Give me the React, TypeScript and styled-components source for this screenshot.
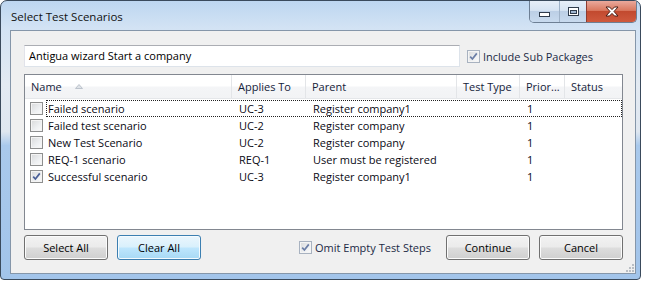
import React from "react";
import styled, { createGlobalStyle } from "styled-components";

const GlobalStyle = createGlobalStyle`
  html, body { margin: 0; padding: 0; background: #fff; }
  body {
    font-family: "Open Sans", "Noto Sans", sans-serif;
    font-size: 11px;
    color: #000;
  }
`;

const Window = styled.div`
  box-sizing: border-box;
  width: 641px;
  height: 280px;
  border: 1px solid #3a4a5c;
  border-radius: 7px 7px 4px 4px;
  padding: 0 4px 5px 9px;
  display: flex;
  flex-direction: column;
  background: linear-gradient(
    180deg,
    #bdd6f0 0%,
    #d3e3f4 10%,
    #e3eaf2 30%,
    #dfe7f0 47%,
    #a9c9ec 52%,
    #a2c4ea 100%
  );
`;

const TitleBar = styled.div`
  height: 29px;
  display: flex;
  align-items: flex-start;
`;

const Title = styled.div`
  margin-left: 1px;
  line-height: 31px;
  font-size: 11.5px;
  color: #111;
  flex: 1;
`;

const Captions = styled.div`
  display: flex;
  margin-right: -1px;
  height: 21px;
  border: 1px solid #6d7f94;
  border-top: none;
  border-radius: 0 0 5px 5px;
  overflow: hidden;
`;

const CaptionButton = styled.div<{ $w: number; $close?: boolean }>`
  width: ${(p) => p.$w}px;
  display: flex;
  align-items: center;
  justify-content: center;
  border-left: ${(p) => (p.$close ? "1px solid #8d3b30" : "1px solid #9fb2c8")};
  background: ${(p) =>
    p.$close
      ? "linear-gradient(180deg, #e9a99c 0%, #d9785f 45%, #c24a2f 50%, #cf5a3e 100%)"
      : "linear-gradient(180deg, #e6eef8 0%, #d6e3f2 45%, #bccfe6 50%, #c8daee 100%)"};
  &:first-child { border-left: none; }
`;

const Client = styled.div`
  position: relative;
  flex: 1;
  border: 1px solid #8596a9;
  background: #f0f0f0;
  padding: 14px 12px 0 13px;
  display: flex;
  flex-direction: column;
`;

const TopRow = styled.div`
  display: flex;
  align-items: center;
  height: 22px;
`;

const TextBox = styled.div`
  box-sizing: border-box;
  width: 436px;
  height: 22px;
  border: 1px solid #dde3ea;
  border-top-color: #abadb3;
  border-left-color: #e2e3ea;
  background: #fff;
  padding-left: 4px;
  line-height: 20px;
  color: #000;
`;

const CheckLabel = styled.label<{ $gap?: number }>`
  display: flex;
  align-items: center;
  gap: 3px;
  margin-left: ${(p) => p.$gap ?? 0}px;
  color: #1b2a45;
  white-space: nowrap;
`;

const Box = styled.span<{ $dim?: boolean }>`
  box-sizing: border-box;
  width: 13px;
  height: 13px;
  border: 1px solid ${(p) => (p.$dim ? "#a8b2c0" : "#8e8f8f")};
  background: linear-gradient(135deg, #d8d9da 0%, #eef0f2 60%, #fbfbfb 100%);
  box-shadow: inset 0 0 0 1px #f4f4f4;
  display: flex;
  align-items: center;
  justify-content: center;
  flex-shrink: 0;
`;

const ListBox = styled.div`
  position: relative;
  margin-top: 7px;
  height: 156px;
  box-sizing: border-box;
  border: 1px solid #828790;
  background: #fff;
`;

const COLS = "207px 74px 151px 63px 45px 1fr";

const HeaderRow = styled.div`
  display: grid;
  grid-template-columns: ${COLS};
  height: 23px;
  background: linear-gradient(180deg, #ffffff 0%, #ffffff 48%, #f4f5f7 52%, #f2f3f5 100%);
  border-bottom: 1px solid #e5e7ea;
`;

const HeadCell = styled.div<{ $last?: boolean }>`
  display: flex;
  align-items: center;
  gap: 13px;
  padding-left: 6px;
  border-right: ${(p) => (p.$last ? "none" : "1px solid #e3e5e8")};
  color: #15233a;
  white-space: nowrap;
  overflow: hidden;
`;

const Rows = styled.div`
  padding-top: 1px;
`;

const Row = styled.div`
  position: relative;
  display: grid;
  grid-template-columns: ${COLS};
  height: 17px;
  align-items: center;
  color: #0a0a14;
`;

const Focus = styled.div`
  position: absolute;
  left: 21px;
  right: 0;
  top: 0;
  bottom: 0;
  border: 1px dotted #222;
  pointer-events: none;
`;

const NameCell = styled.div`
  display: flex;
  align-items: center;
  gap: 5px;
  padding-left: 5px;
  white-space: nowrap;
`;

const Cell = styled.div`
  padding-left: 7px;
  white-space: nowrap;
  overflow: hidden;
`;

const ButtonRow = styled.div`
  display: flex;
  align-items: center;
  margin-top: 5px;
  height: 25px;
  gap: 9px;
`;

const Button = styled.div<{ $hot?: boolean }>`
  box-sizing: border-box;
  width: 84px;
  height: 25px;
  border-radius: 3px;
  display: flex;
  align-items: center;
  justify-content: center;
  color: #000;
  border: 1px solid ${(p) => (p.$hot ? "#3c7fb1" : "#707070")};
  box-shadow: inset 0 0 0 1px ${(p) => (p.$hot ? "#f4fbff" : "#fbfbfb")};
  background: ${(p) =>
    p.$hot
      ? "linear-gradient(180deg, #eaf6fd 0%, #d9f0fc 48%, #bee6fd 52%, #a7d9f5 100%)"
      : "linear-gradient(180deg, #f2f2f2 0%, #ebebeb 48%, #dddddd 52%, #cfcfcf 100%)"};
`;

const Spacer = styled.div`
  flex: 1;
`;

const Grip = styled.svg`
  position: absolute;
  right: 1px;
  bottom: 1px;
`;

const Check = ({ color = "#4a5f97" }: { color?: string }) => (
  <svg width="9" height="9" viewBox="0 0 9 9">
    <path d="M1.2 4.6 L3.4 7 L7.8 1.4" fill="none" stroke={color} strokeWidth="1.7" />
  </svg>
);

type Scenario = { name: string; applies: string; parent: string; prio: string; checked?: boolean };

const scenarios: Scenario[] = [
  { name: "Failed scenario", applies: "UC-3", parent: "Register company1", prio: "1" },
  { name: "Failed test scenario", applies: "UC-2", parent: "Register company", prio: "1" },
  { name: "New Test Scenario", applies: "UC-2", parent: "Register company", prio: "1" },
  { name: "REQ-1 scenario", applies: "REQ-1", parent: "User must be registered", prio: "1" },
  { name: "Successful scenario", applies: "UC-3", parent: "Register company1", prio: "1", checked: true },
];

export default function App() {
  return (
    <>
      <GlobalStyle />
      <Window>
        <TitleBar>
          <Title>Select Test Scenarios</Title>
          <Captions>
            <CaptionButton $w={29}>
              <svg width="11" height="5" viewBox="0 0 11 5" style={{ marginTop: 5 }}>
                <rect x="0.5" y="0.5" width="10" height="4" fill="#fff" stroke="#2f3b4c" />
              </svg>
            </CaptionButton>
            <CaptionButton $w={26}>
              <svg width="11" height="9" viewBox="0 0 11 9">
                <rect x="0.5" y="0.5" width="10" height="8" fill="#fff" stroke="#2f3b4c" />
                <rect x="2.5" y="3.5" width="6" height="3" fill="#9fb6d2" stroke="#2f3b4c" />
              </svg>
            </CaptionButton>
            <CaptionButton $w={49} $close>
              <svg width="14" height="11" viewBox="0 0 14 11">
                <path
                  d="M1 1 L4.5 1 L7 3.6 L9.5 1 L13 1 L9 5.5 L13 10 L9.5 10 L7 7.4 L4.5 10 L1 10 L5 5.5 Z"
                  fill="#fff"
                  stroke="#4a1d14"
                  strokeWidth="1"
                />
              </svg>
            </CaptionButton>
          </Captions>
        </TitleBar>

        <Client>
          <TopRow>
            <TextBox>Antigua wizard Start a company</TextBox>
            <CheckLabel $gap={7}>
              <Box $dim>
                <Check color="#6b7ea6" />
              </Box>
              Include Sub Packages
            </CheckLabel>
          </TopRow>

          <ListBox>
            <HeaderRow>
              <HeadCell>
                Name
                <svg width="8" height="5" viewBox="0 0 8 5">
                  <path d="M0.5 4.5 L4 0.5 L7.5 4.5 Z" fill="#dfe3e8" stroke="#bcc3cc" strokeWidth="1" />
                </svg>
              </HeadCell>
              <HeadCell>Applies To</HeadCell>
              <HeadCell>Parent</HeadCell>
              <HeadCell>Test Type</HeadCell>
              <HeadCell>Prior...</HeadCell>
              <HeadCell $last>Status</HeadCell>
            </HeaderRow>
            <Rows>
              {scenarios.map((s, i) => (
                <Row key={s.name}>
                  {i === 0 && <Focus />}
                  <NameCell>
                    <Box>{s.checked && <Check />}</Box>
                    {s.name}
                  </NameCell>
                  <Cell>{s.applies}</Cell>
                  <Cell>{s.parent}</Cell>
                  <Cell />
                  <Cell>{s.prio}</Cell>
                  <Cell />
                </Row>
              ))}
            </Rows>
          </ListBox>

          <ButtonRow>
            <Button>Select All</Button>
            <Button $hot>Clear All</Button>
            <Spacer />
            <CheckLabel>
              <Box $dim>
                <Check color="#6b7ea6" />
              </Box>
              Omit Empty Test Steps
            </CheckLabel>
            <Button style={{ marginLeft: 6 }}>Continue</Button>
            <Button>Cancel</Button>
          </ButtonRow>

          <Grip width="8" height="8" viewBox="0 0 8 8">
            {[
              [6, 0],
              [6, 3],
              [3, 3],
              [6, 6],
              [3, 6],
              [0, 6],
            ].map(([x, y]) => (
              <rect key={`${x}-${y}`} x={x} y={y} width="2" height="2" fill="#b9bec4" />
            ))}
          </Grip>
        </Client>
      </Window>
    </>
  );
}
